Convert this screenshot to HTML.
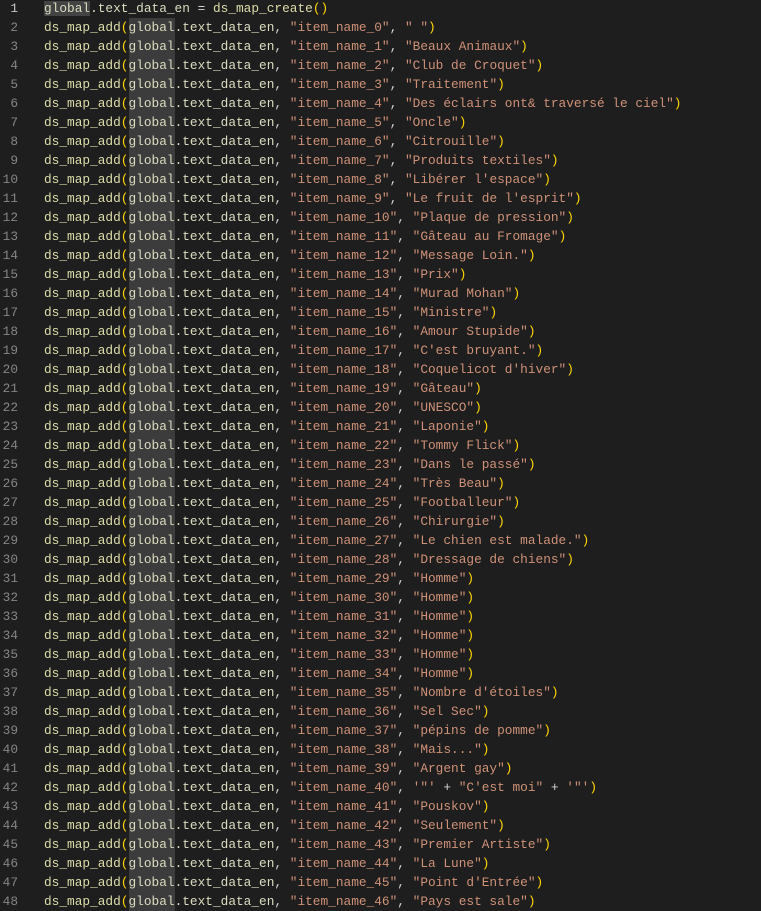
<!DOCTYPE html>
<html><head><meta charset="utf-8"><style>
html,body{margin:0;padding:0;background:#1e1e1e;width:761px;height:911px;overflow:hidden}
.strip{position:absolute;left:128.6px;width:46.2px;top:18px;height:893px;background:#3c3c3c}
.ed{position:absolute;top:-1px;left:0;font-family:"Liberation Mono",monospace;font-size:12.8px;line-height:19px;color:#d4d4d4}
.l{height:19px;position:relative;white-space:pre}
.n{position:absolute;left:0;width:18px;text-align:right;color:#858585}
.c{position:absolute;left:44px}
.f{color:#dcdcaa}
.v{color:#dcdcc0}
.s{color:#ce9178}
.b{color:#ffd700}
.h{background:#434343}
.cur .n{color:#c6c6c6}
</style></head><body><div class="strip"></div><div class="ed" id="ed"><div class="l cur"><span class="n">1</span><span class="c"><span class="v h">global</span><span class="v">.text_data_en</span> = <span class="f">ds_map_create</span><span class="b">()</span></span></div></div>
<script>
var items=[" ","Beaux Animaux","Club de Croquet","Traitement","Des éclairs ont&amp; traversé le ciel","Oncle","Citrouille","Produits textiles","Libérer l'espace","Le fruit de l'esprit","Plaque de pression","Gâteau au Fromage","Message Loin.","Prix","Murad Mohan","Ministre","Amour Stupide","C'est bruyant.","Coquelicot d'hiver","Gâteau","UNESCO","Laponie","Tommy Flick","Dans le passé","Très Beau","Footballeur","Chirurgie","Le chien est malade.","Dressage de chiens","Homme","Homme","Homme","Homme","Homme","Homme","Nombre d'étoiles","Sel Sec","pépins de pomme","Mais...","Argent gay",null,"Pouskov","Seulement","Premier Artiste","La Lune","Point d'Entrée","Pays est sale"];
var h="";
for(var i=0;i<items.length;i++){
var val=items[i]===null?'<span class="s">\'"\'</span> + <span class="s">"C\'est moi"</span> + <span class="s">\'"\'</span>':'<span class="s">"'+items[i]+'"</span>';
h+='<div class="l"><span class="n">'+(i+2)+'</span><span class="c"><span class="f">ds_map_add</span><span class="b">(</span><span class="v">global</span><span class="v">.text_data_en</span>, <span class="s">"item_name_'+i+'"</span>, '+val+'<span class="b">)</span></span></div>';
}
document.getElementById("ed").insertAdjacentHTML("beforeend",h);
</script>
</body></html>
